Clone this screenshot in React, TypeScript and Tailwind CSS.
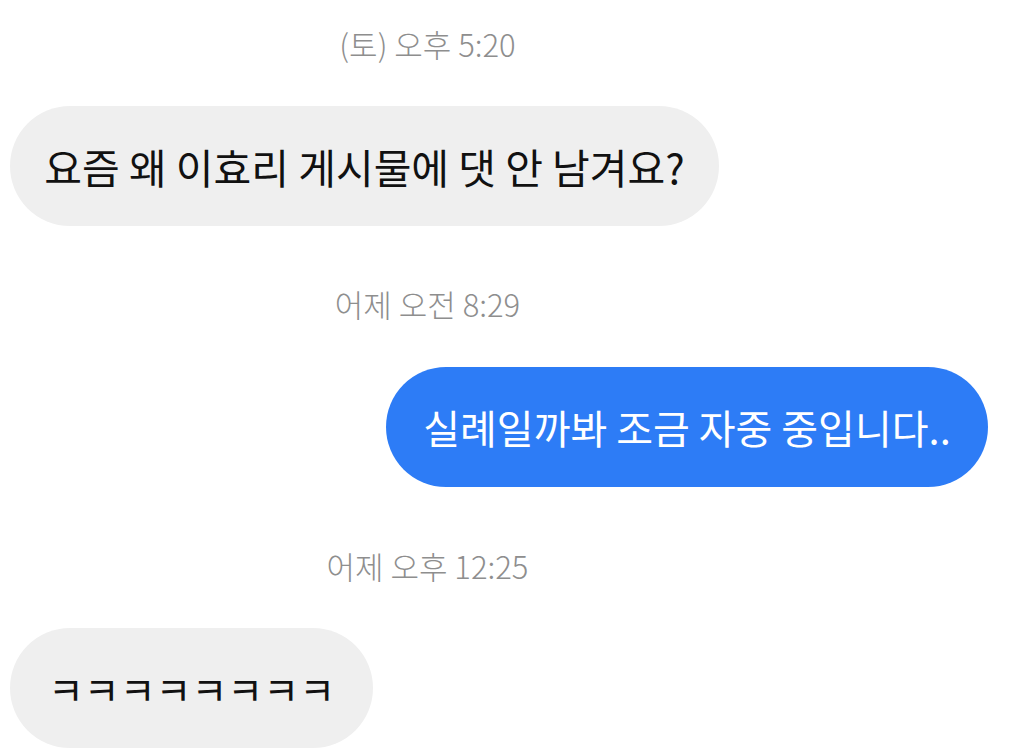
import React from "react";

const font = { fontFamily: '"Noto Sans CJK KR", "Noto Sans", sans-serif' };

function Stamp({ children }: { children: React.ReactNode }) {
  return (
    <div className="w-[855px] h-[40px] flex items-center justify-center text-[31px] text-[#8e8e8e] leading-none font-light">
      {children}
    </div>
  );
}

export default function App() {
  return (
    <div className="w-[1013px] h-[748px] bg-white overflow-hidden" style={font}>
      <div className="pt-[23px]">
        <Stamp>(토) 오후 5:20</Stamp>
      </div>
      <div className="mt-[43px] ml-[10px] w-[709px] h-[120px] rounded-full bg-[#efefef] flex items-center justify-center text-[41px] text-[#111] leading-none">
        요즘 왜 이효리 게시물에 댓 안 남겨요?
      </div>
      <div className="mt-[57px]">
        <Stamp>어제 오전 8:29</Stamp>
      </div>
      <div className="mt-[44px] flex justify-end pr-[25px]">
        <div className="w-[602px] h-[120px] rounded-full bg-[#2d7cf6] flex items-center justify-center text-[40px] text-white leading-none">
          실례일까봐 조금 자중 중입니다..
        </div>
      </div>
      <div className="mt-[58px]">
        <Stamp>어제 오후 12:25</Stamp>
      </div>
      <div className="mt-[43px] ml-[10px] w-[363px] h-[120px] rounded-full bg-[#efefef] flex items-center justify-center text-[39px] text-[#111] leading-none">
        ㅋㅋㅋㅋㅋㅋㅋㅋ
      </div>
    </div>
  );
}
